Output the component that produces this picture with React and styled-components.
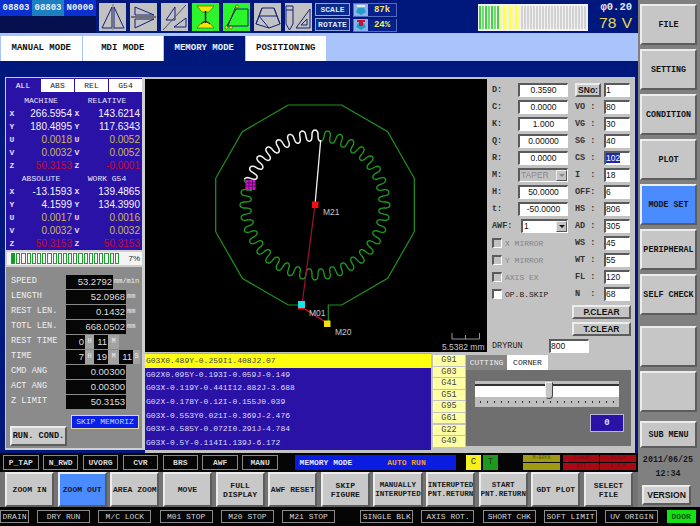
import React from 'react';
import styled, { createGlobalStyle, css } from 'styled-components';

const Global = createGlobalStyle`
  html, body { margin: 0; padding: 0; background: #000; }
  * { box-sizing: border-box; }
`;

const mono = css`font-family: "Liberation Mono", "DejaVu Sans Mono", monospace;`;
const sans = css`font-family: "Liberation Sans", Arial, sans-serif;`;
const raised = css`
  border-style: solid; border-width: 2px;
  border-color: #ececec #5c5c5c #5c5c5c #ececec;
`;
const sunken = css`
  border-style: solid; border-width: 2px 1px 1px 2px;
  border-color: #5a5a5a #fff #fff #5a5a5a;
`;

const Root = styled.div`
  width: 700px; height: 526px; overflow: hidden; display: flex; flex-direction: column;
  background: #000; ${mono}
`;
const Upper = styled.div`display: flex; height: 507px;`;
const Main = styled.div`width: 638px; display: flex; flex-direction: column; background: #00187c;`;

/* ---------- top bar ---------- */
const TopBar = styled.div`height: 33px; display: flex; align-items: flex-start; background: #00187c;`;
const Program = styled.div`width: 96px; height: 33px; background: #07104f; flex: none;`;
const ProgramRow = styled.div`display: flex; height: 16px;`;
const ProgramCell = styled.div`
  width: 32px; line-height: 16px; text-align: center; font-size: 9px; font-weight: bold; color: #e8f0ff;
  background: ${p => p.$alt ? '#1c80c0' : '#0a30d0'};
`;
const IconRow = styled.div`display: flex; gap: 4px; margin: 3px 0 0 3px;`;
const IconTile = styled.div`
  width: 27px; height: 28px; background: ${p => p.$on ? '#2cf52c' : '#c2c2c2'};
  svg { display: block; width: 27px; height: 28px; }
`;
const ScaleCol = styled.div`display: flex; flex-direction: column; gap: 2px; margin: 3px 0 0 3px; width: 35px;`;
const ScaleBtn = styled.div`
  height: 13px; line-height: 11px; text-align: center; font-size: 8px; font-weight: bold; color: #dce6ff;
  background: #0c2a8c; border: 1px solid #8ea6dc;
`;
const ValueCol = styled.div`display: flex; flex-direction: column; gap: 2px; margin: 3px 0 0 3px; width: 44px;`;
const ValueRow = styled.div`
  height: 13.5px; display: flex; align-items: center; background: #4d6cc0; padding: 0 1px;
  svg { display: block; flex: none; }
`;
const ValueText = styled.div`
  flex: 1; height: 12px; line-height: 12px; background: #05208c; color: #f0e860; font-size: 9px; font-weight: bold; text-align: center;
`;
const Gauge = styled.div`
  width: 110px; height: 27px; margin: 4px 0 0 81px; background: #f2f2f2; padding: 2px 1px;
  display: flex; gap: 1px; flex: none;
`;
const Tick = styled.div`width: 2px; flex: none; background: ${p => p.$c};`;
const SpindleCol = styled.div`width: 35px; margin: 2px 0 0 9px; text-align: right; flex: none;`;
const Phi = styled.div`font-size: 10.5px; font-weight: bold; color: #e0e8ff; line-height: 11px;`;
const Volt = styled.div`${sans} font-size: 15.5px; color: #e8d84c; line-height: 17px; margin-top: 1px; word-spacing: 1px; white-space: nowrap;`;

/* ---------- mode tabs ---------- */
const ModeStrip = styled.div`height: 28px; background: #a9c4fa; padding: 3px 0 0 1px; display: flex; gap: 1px;`;
const ModeTab = styled.div`
  width: 80.5px; line-height: 25px; text-align: center; font-size: 9px; font-weight: bold;
  color: ${p => p.$on ? '#e8f0ff' : '#101010'}; background: ${p => p.$on ? '#00187c' : '#fff'};
`;

/* ---------- workspace ---------- */
const Workspace = styled.div`height: 392px; padding-top: 16px; display: flex; background: #00187c;`;
const LeftPanel = styled.div`
  width: 140px; height: 373px; margin-left: 5px; padding: 1px 3px 2px 1px; background: #cfcfcf; flex: none;
  display: flex; flex-direction: column; gap: 2px;
`;
const PositionPanel = styled.div`height: 172px; background: #2b12a6; padding: 1px 2px 0; color: #fff;`;
const PosTabs = styled.div`display: flex; gap: 1px; margin: 0 -2px; height: 13px;`;
const PosTab = styled.div`
  width: ${p => p.$w}px; line-height: 13px; text-align: center; font-size: 8px;
  color: ${p => p.$on ? '#fff' : '#222'}; background: ${p => p.$on ? '#2b12a6' : '#fff'};
`;
const PosHead = styled.div`
  display: grid; grid-template-columns: 66px 66px; height: ${p => p.$first ? 15 : 13}px;
  padding-top: ${p => p.$first ? 2 : 0}px; line-height: 13px; text-align: center; font-size: 8px; color: #e8e8ff;
`;
const PosRow = styled.div`
  display: grid; grid-template-columns: 8px 56px 10px 58px; height: 13px; line-height: 13px; font-size: 10px;
  ${sans} color: ${p => p.$c};
`;
const Axis = styled.div`${mono} text-align: center; font-size: 8px; font-weight: bold; color: #e0e0ff;`;
const PosVal = styled.div`text-align: right;`;

const ProgressBox = styled.div`
  height: 13px; background: #f4f4f4; display: flex; align-items: center; padding: 0 2px 0 4px; border-left: 1px solid #ccc;
`;
const Cells = styled.div`display: flex; gap: 1px; flex: none; width: 110px;`;
const Cell = styled.div`
  width: 4.2px; height: 11px; flex: none; border: 1px solid #1f9d2f;
  background: ${p => p.$on ? '#0d9a22' : 'transparent'};
`;
const Percent = styled.div`${sans} font-size: 8px; color: #222; margin-left: auto;`;

const InfoPanel = styled.div`
  flex: 1; background: #8b8b8b; padding: 8px 0 0 5px; display: flex; flex-direction: column; gap: 1.5px; color: #f0f0f0;
`;
const InfoRow = styled.div`display: flex; height: 13.5px; align-items: stretch;`;
const InfoLabel = styled.div`width: 55px; line-height: 13.5px; font-size: 8.6px; flex: none;`;
const ValueBox = styled.div`
  ${sans} width: ${p => p.$w}px; background: #060606; color: #dedede; font-size: 9.5px; text-align: right; line-height: 13.5px; padding-right: 1px; flex: none;
`;
const UnitText = styled.div`
  line-height: 13.5px; font-size: 7px; color: #ededed; padding-left: 1px; white-space: nowrap;
  ${p => p.$w && `width: ${p.$w}px; text-align: center; padding: 0; background: #a2a2a2;`}
`;
const Footer = styled.div`display: flex; gap: 4px; margin-left: -1px;`;
const RunBtn = styled.div`
  ${raised} width: 57px; height: 20px; margin-top: 16px; line-height: 16px; text-align: center; background: #cacaca; color: #111;
  font-size: 8.6px; font-weight: bold; white-space: nowrap;
`;
const SkipBtn = styled.div`
  width: 68px; height: 14px; margin-top: 5px; line-height: 12px; text-align: center; background: #0a1ee8; color: #b6dcff;
  border: 1px solid #e0d8a0; font-size: 8px; white-space: nowrap;
`;

const CenterCol = styled.div`width: 490px; display: flex; flex-direction: column; background: #c2c2c2; flex: none;`;
const UpperRow = styled.div`height: 276px; display: flex;`;
const Canvas = styled.div`
  width: 342px; height: 273px; margin-top: 2px; background: #000; flex: none;
  svg { display: block; }
`;
const Params = styled.div`flex: 1; padding: 6px 0 0 5px; color: #222;`;
const ParamCols = styled.div`display: flex;`;
const ParamCol = styled.div`display: flex; flex-direction: column; gap: 3px; width: ${p => p.$w}px; flex: none;`;
const ParamRow = styled.div`display: flex; height: 14px; align-items: center; font-size: 8.5px; ${p => p.$off && 'color: #858585;'}`;
const ParamLabel = styled.div`width: ${p => p.$w}px; flex: none; font-weight: bold; color: #333; white-space: pre;`;
const Field = styled.div`
  ${sunken} ${sans} width: ${p => p.$w}px; height: 14px; background: #fff; color: #111; flex: none;
  font-size: 8.5px; line-height: 11px; text-align: ${p => p.$center ? 'center' : 'left'};
`;
const Combo = styled.div`
  ${sunken} ${sans} width: ${p => p.$w}px; height: 14px; flex: none; display: flex; align-items: stretch; justify-content: space-between;
  background: ${p => p.$off ? '#c2c2c2' : '#fff'}; color: ${p => p.$off ? '#8a8a8a' : '#111'}; font-size: 8.5px; line-height: 11px; padding-left: 1px;
`;
const ComboBtn = styled.div`
  width: 11px; background: #c4c4c4; border: 1px solid; border-color: #eee #555 #555 #eee; display: flex; align-items: center; justify-content: center;
  &::after {
    content: ''; border-style: solid; border-width: 3px 3px 0; border-color: ${p => p.$off ? '#888' : '#111'} transparent transparent;
  }
`;
const Check = styled.div`
  ${sunken} width: 10px; height: 10px; flex: none; margin-right: 3px; background: ${p => p.$off ? '#c2c2c2' : '#fff'};
`;
const CheckText = styled.div`font-size: 8px;`;
const SnoBtn = styled.div`
  ${raised} ${sans} width: 26px; height: 14px; margin-right: 3px; line-height: 10px; font-size: 8.5px; font-weight: bold; text-align: center; background: #c8c8c8; color: #111;
`;
const Selected = styled.span`background: #1a2ab0; color: #fff;`;
const ClearCol = styled.div`display: flex; flex-direction: column; gap: 3px; margin: 4px 0 0 80px; width: 59px;`;
const ClearBtn = styled.div`
  ${raised} ${sans} height: 14px; line-height: 10px; text-align: center; font-size: 8.5px; font-weight: bold; color: #111; background: #c4c4c4;
`;
const DryRow = styled.div`display: flex; align-items: center; height: 14px; margin-top: 3px; font-size: 8.5px;`;
const DryLabel = styled.div`width: 57px; flex: none; color: #222;`;

const LowerRow = styled.div`height: 97px; display: flex;`;
const CodeList = styled.div`width: 286px; background: #2b12a6; border-top: 1px solid #aaa; flex: none;`;
const CodeLine = styled.div`
  height: 13.7px; line-height: 13.7px; padding-left: 1px; font-size: 8px; white-space: pre;
  color: ${p => p.$on ? '#444' : '#dcdcff'}; background: ${p => p.$on ? '#ffff10' : 'transparent'};
`;
const GCol = styled.div`width: 34px; padding: 2px 0 0 2px; display: flex; flex-direction: column; gap: 1.1px; flex: none;`;
const GCell = styled.div`
  width: 32px; height: 10.5px; background: #ffffa4; color: #444; font-size: 8.5px; line-height: 10.5px; text-align: center;
`;
const CutPanel = styled.div`flex: 1; display: flex; flex-direction: column; padding-left: 1px;`;
const CutTabs = styled.div`display: flex; height: 17px; padding-top: 2px;`;
const CutTab = styled.div`
  width: ${p => p.$w}px; line-height: 15px; text-align: center; font-size: 8px;
  color: ${p => p.$on ? '#222' : '#eee'}; background: ${p => p.$on ? '#fff' : '#858585'};
`;
const CutBody = styled.div`width: 165px; height: 76px; background: #6f6f6f; padding: 11px 0 0 9px;`;
const SliderBox = styled.div`width: 144px; height: 26px; background: #bdbdbd; padding-top: 3px; position: relative;`;
const Trough = styled.div`height: 13px; background: #fff; border-top: 2px solid #333;`;
const Thumb = styled.div`
  position: absolute; left: 70px; top: 1px; width: 8px; height: 17px; background: #c6c6c6;
  border: 1px solid; border-color: #eee #444 #444 #eee; border-radius: 0 0 4px 4px;
`;
const Dots = styled.div`
  height: 2px; margin: 4px 5px 0;
  background: repeating-linear-gradient(90deg, #333 0 1px, transparent 1px 7px);
`;
const ZeroBox = styled.div`
  width: 34px; height: 18px; margin: 7px 0 0 115px; background: #2b12a6; color: #dfe4ff; border: 1px solid #b8b8d8; font-size: 9px; font-weight: bold; line-height: 16px; text-align: center;
`;

/* ---------- status row ---------- */
const StatusRow = styled.div`height: 19px; background: #050505; display: flex; padding: 2px 0 2px 3px; flex: none;`;
const FlagGroup = styled.div`display: flex; gap: 4.4px; flex: none; width: 292px;`;
const Flag = styled.div`
  width: 35.5px; line-height: 13px; border: 1px solid #8a8a8a; text-align: center; font-size: 8px; color: #d8d8d8; font-weight: bold;
`;
const ModeBlock = styled.div`
  width: 161px; background: #0a1ce0; display: flex; line-height: 15px; font-size: 8px; font-weight: bold; flex: none;
`;
const ModeName = styled.div`width: 62px; text-align: center; color: #e0e8ff; white-space: nowrap;`;
const RunName = styled.div`flex: 1; text-align: center; color: #f09a3a;`;
const Lamp = styled.div`
  width: 15px; margin-left: ${p => p.$ml}px; text-align: center; line-height: 15px; font-size: 9px; color: #333; background: ${p => p.$c}; flex: none;
`;
const Alarm = styled.div`
  display: grid; grid-template-columns: ${p => p.$cols}; grid-template-rows: 1fr 1fr; gap: 1px; margin-left: ${p => p.$ml}px; width: ${p => p.$w}px; flex: none;
`;
const AlarmCell = styled.div`
  font-size: 5px; line-height: 7px; text-align: center; overflow: hidden; white-space: nowrap;
  background: ${p => p.$c}; color: ${p => p.$t};
`;

/* ---------- soft keys ---------- */
const SoftKeys = styled.div`
  height: 35px; display: flex; gap: 3.5px; padding: 0 5px; background: #737373; flex: none;
`;
const SoftKey = styled.div`
  ${raised} flex: 1 1 0; min-width: 0; display: flex; align-items: center; justify-content: center; text-align: center;
  font-size: ${p => p.$small ? 7.6 : 8.1}px; line-height: 9px; font-weight: bold; color: #1a1a1a; white-space: pre; overflow: hidden;
  background: ${p => p.$on ? '#4a8cff' : '#c8c8c8'};
`;

/* ---------- sidebar ---------- */
const Side = styled.div`
  width: 62px; background: #808080; padding: 4px 3px 0 2px; display: flex; flex-direction: column; gap: 4px; flex: none;
`;
const SideBtn = styled.div`
  ${raised} height: ${p => p.$h || 41}px; ${p => p.$mt ? `margin-top: ${p.$mt}px;` : ''} display: flex; align-items: center; justify-content: center;
  font-size: 8.4px; font-weight: bold; color: #111; white-space: nowrap;
  background: ${p => p.$on ? '#4a8cff' : '#c6c6c6'};
`;
const DateBlock = styled.div`
  text-align: center; font-size: 8.4px; font-weight: bold; color: #181818; line-height: 14px; padding-top: 1px; margin-left: -1px;
`;
const VersionBtn = styled.div`
  ${raised} ${sans} width: 49px; height: 20px; margin: 4px 0 0 3px; line-height: 16px; background: #cfcfcf; color: #111; font-size: 8.6px; font-weight: bold; text-align: center;
`;

/* ---------- bottom strip ---------- */
const BottomStrip = styled.div`height: 19px; display: flex; padding: 3px 0 3px 0; background: #050505;`;
const BottomGroup = styled.div`display: flex; gap: 8.3px; margin-left: ${p => p.$ml}px; flex: none;`;
const BottomFlag = styled.div`
  width: ${p => p.$w || 53}px; line-height: 11px; text-align: center; border: 1px solid #8a8a8a; font-size: 8px; color: #d4d4d4; white-space: nowrap; overflow: hidden;
  ${p => p.$on && 'background: #14e014; color: #0a5a0a; border-color: #14e014; font-weight: bold;'}
`;

/* ---------- data ---------- */
const N = '#14207c';
const ic = { fill: 'none', stroke: N, strokeWidth: 1 };
const Icon1 = () => (
  <svg viewBox="0 0 27 28" {...ic}><path d="M13 4L3 25H13Z M15 4L25 25H15Z" /><path d="M14 1V27" stroke="#777" /></svg>
);
const Icon2 = () => (
  <svg viewBox="0 0 27 28" {...ic}><path d="M5 4L24 12H5Z M5 25L24 16H5Z" /><path d="M1 14H26" strokeWidth="1.5" stroke="#555" /></svg>
);
const Icon3 = () => (
  <svg viewBox="0 0 27 28" {...ic}><path d="M14 4V17L5 17Z M13 24L25 24V15Z" /><path d="M2 27L25 2" stroke="#555" /></svg>
);
const Icon4 = () => (
  <svg viewBox="0 0 27 28">
    <path d="M5 3H22L17 9H10Z M5 25H22L17 19H10Z" fill="#f5e500" stroke="#333" strokeWidth=".5" />
    <path d="M13.5 8V20" stroke="#111" strokeWidth="1.5" />
    <path d="M9 21L13.5 18L18 21" stroke="#111" fill="none" />
  </svg>
);
const Icon5 = () => (
  <svg viewBox="0 0 27 28">
    <path d="M13 6H25V23H4Z" fill="none" stroke={N} />
    <path d="M13 3L4 25" stroke="#333" fill="none" />
    <circle cx="14" cy="3.5" r="1.5" fill="#f5e500" stroke="#333" strokeWidth=".5" />
    <circle cx="3.5" cy="24.5" r="1.5" fill="#f5e500" stroke="#333" strokeWidth=".5" />
    <circle cx="8" cy="24.5" r="1.5" fill="#f5e500" stroke="#333" strokeWidth=".5" />
  </svg>
);
const Icon6 = () => (
  <svg viewBox="0 0 27 28" {...ic}><path d="M8 5H20L26 21L15 25L2 21Z M8 5L5 13H23L20 5 M5 13L2 21 M23 13L26 21 M5 13L15 25" /></svg>
);
const Icon7 = () => (
  <svg viewBox="0 0 27 28" {...ic}><path d="M1 3H8V21L4.5 27L1 21Z M1 7H8" /><path d="M25 6V25H11Z M22 16V22H16Z" /></svg>
);
const tiles = [[Icon1], [Icon2], [Icon3], [Icon4, 1], [Icon5, 1], [Icon6], [Icon7]];

const Thumbnail = ({ red }) => (
  <svg width="14" height="12" viewBox="0 0 14 12">
    <rect width="14" height="12" fill="#8fb0e8" />
    <path d="M2 8L7 11L12 8L10 4H4Z" fill="#1fa0c8" />
    <path d="M3 2H11" stroke={red ? '#d0102a' : '#e8e8e8'} strokeWidth="2" />
    {red && <rect x="5" y="1" width="4" height="6" fill="#d0102a" />}
  </svg>
);

const gaugeTicks = Array.from({ length: 36 }, (_, i) =>
  i < 7 ? (i % 2 ? '#6fe06f' : '#46d246') : i < 14 ? (i % 2 ? '#fbfb90' : '#ffff48') : '#d2d2d2');

const posBlocks = [
  {
    head: ['MACHINE', 'RELATIVE'],
    rows: [
      ['X', '266.5954', 'X', '143.6214', '#f4f4ff'],
      ['Y', '180.4895', 'Y', '117.6343', '#f4f4ff'],
      ['U', '0.0018', 'U', '0.0052', '#c8b85c'],
      ['V', '0.0032', 'V', '0.0052', '#c8b85c'],
      ['Z', '50.3153', 'Z', '-0.0001', '#c0102c'],
    ],
  },
  {
    head: ['ABSOLUTE', 'WORK G54'],
    rows: [
      ['X', '-13.1593', 'X', '139.4865', '#f4f4ff'],
      ['Y', '4.1599', 'Y', '134.3990', '#f4f4ff'],
      ['U', '0.0017', 'U', '0.0016', '#c8b85c'],
      ['V', '0.0032', 'V', '0.0032', '#c8b85c'],
      ['Z', '50.3153', 'Z', '50.3153', '#c0102c'],
    ],
  },
];

const info = [
  ['SPEED', '53.2792', 'mm/min', 47],
  ['LENGTH', '52.0968', 'mm', 60],
  ['REST LEN.', '0.1432', 'mm', 60],
  ['TOTL LEN.', '668.0502', 'mm', 60],
];
const info2 = [['CMD ANG', '0.00300'], ['ACT ANG', '0.00300'], ['Z LIMIT', '50.3153']];

const leftParams = [
  ['D:', '0.3590'], ['C:', '0.0000'], ['K:', '1.000'], ['Q:', '0.00000'], ['R:', '0.0000'],
];
const leftParams2 = [['H:', '50.0000'], ['t:', '-50.0000']];
const rightParams = [
  ['VO :', '80'], ['VG :', '30'], ['SG :', '40'], ['CS :', '102', 1], ['I  :', '18'], ['OFF:', '6'],
  ['HS :', '806'], ['AD :', '305'], ['WS :', '45'], ['WT :', '55'], ['FL :', '120'], ['N  :', '68'],
];
const code = [
  'G03X0.489Y-0.259I1.408J2.07',
  'G02X0.095Y-0.193I-0.059J-0.149',
  'G03X-0.119Y-0.441I12.882J-3.688',
  'G02X-0.178Y-0.12I-0.155J0.039',
  'G03X-0.553Y0.021I-0.369J-2.476',
  'G03X-0.585Y-0.072I0.291J-4.784',
  'G03X-0.5Y-0.114I1.139J-6.172',
];
const gCodes = ['G91', 'G03', 'G41', 'G51', 'G95', 'G61', 'G22', 'G49'];
const flags = ['P_TAP', 'N_RWD', 'UVORG', 'CVR', 'BRS', 'AWF', 'MANU'];
const softKeys = [
  ['ZOOM IN'], ['ZOOM OUT', 1], ['AREA ZOOM'], ['MOVE'], ['FULL\nDISPLAY'], ['AWF RESET'], ['SKIP\nFIGURE'],
  ['MANUALLY\nINTERUPTED', 0, 1], ['INTERUPTED\nPNT.RETURN', 0, 1], ['START\nPNT.RETURN', 0, 1], ['GDT PLOT'], ['SELECT\nFILE'],
];
const sideTop = [['FILE'], ['SETTING'], ['CONDITION'], ['PLOT'], ['MODE SET', 1], ['PERIPHERAL'], ['SELF CHECK']];

/* gear wave: angles in degrees, screen coordinates, centre 170,125 */
const wave = (from, to) => {
  const cx = 170, cy = 125, pts = [];
  const steps = Math.abs(to - from) * 2;
  for (let i = 0; i <= steps; i++) {
    const a = from + (to - from) * (i / steps);
    const phi = ((a + 90) * 36 * Math.PI) / 180;
    const r = 69.5 + 5.5 * Math.cos(phi);
    const t = ((a + 0.7 * Math.sin(2 * phi)) * Math.PI) / 180;
    pts.push(`${(cx + r * Math.cos(t)).toFixed(1)},${(cy + r * Math.sin(t)).toFixed(1)}`);
  }
  return 'M' + pts.join('L');
};

const Drawing = () => (
  <svg width="342" height="273" viewBox="0 -1 342 273">
    <path
      d="M143.3 25H196.7L242.7 51.7L269.3 98.3V151.7L242.7 198.3L196.7 225H183.3V243 M143.3 25L97.3 51.7L70.7 98.3V151.7L97.3 198.3L143.3 225H157"
      fill="none" stroke="#1f951f" strokeWidth="1.2"
    />
    <path d={wave(-160, -445)} fill="none" stroke="#1f9d1f" strokeWidth="1.3" />
    <path d={wave(-85, -160)} fill="none" stroke="#f2f2f2" strokeWidth="1.5" />
    <path d="M170 125L175.7 60" stroke="#f2f2f2" strokeWidth="1.3" />
    <path d="M170 125L156.7 227" stroke="#a01030" strokeWidth="1.2" />
    <path d="M156.7 227L182 243" stroke="#e01030" strokeWidth="1.2" />
    <rect x="100.5" y="100" width="10" height="10" fill="#c818c8" />
    <path d="M100.5 103H110.5M100.5 106H110.5M104 100V110M107.5 100V110" stroke="#300030" strokeWidth=".6" />
    <rect x="167" y="121.5" width="6.5" height="6.5" fill="#f01010" />
    <rect x="153" y="221" width="7" height="7" fill="#10e8e8" />
    <rect x="153" y="228" width="6" height="1.5" fill="#f01010" />
    <rect x="179" y="240.5" width="6.5" height="6.5" fill="#f0e010" />
    <g fontFamily="'Liberation Sans', sans-serif" fontSize="8.5" fill="#c8c8c8">
      <text x="178" y="135">M21</text>
      <text x="164" y="236">M01</text>
      <text x="190" y="255">M20</text>
      <text x="297" y="270">5.5382 mm</text>
    </g>
    <path d="M307 253V259H334.5V253M320.5 255V259" fill="none" stroke="#bdbdbd" strokeWidth=".8" />
  </svg>
);

const TimeRow = ({ label, a, b, c }) => (
  <InfoRow>
    <InfoLabel>{label}</InfoLabel>
    <ValueBox $w={19}>{a}</ValueBox>
    <UnitText $w={9}>H</UnitText>
    <ValueBox $w={14}>{b}</ValueBox>
    <UnitText $w={11}>M</UnitText>
    {c && <ValueBox $w={14}>{c}</ValueBox>}
    {c && <UnitText $w={7}>S</UnitText>}
  </InfoRow>
);

export default function App() {
  return (
    <Root>
      <Global />
      <Upper>
        <Main>
          <TopBar>
            <Program>
              <ProgramRow>
                <ProgramCell>08803</ProgramCell>
                <ProgramCell $alt>08803</ProgramCell>
                <ProgramCell>N0000</ProgramCell>
              </ProgramRow>
            </Program>
            <IconRow>
              {tiles.map(([I, on], i) => <IconTile key={i} $on={on}><I /></IconTile>)}
            </IconRow>
            <ScaleCol>
              <ScaleBtn>SCALE</ScaleBtn>
              <ScaleBtn>ROTATE</ScaleBtn>
            </ScaleCol>
            <ValueCol>
              <ValueRow><Thumbnail /><ValueText>87k</ValueText></ValueRow>
              <ValueRow><Thumbnail red /><ValueText>24%</ValueText></ValueRow>
            </ValueCol>
            <Gauge>{gaugeTicks.map((c, i) => <Tick key={i} $c={c} />)}</Gauge>
            <SpindleCol>
              <Phi>φ0.20</Phi>
              <Volt>78 V</Volt>
            </SpindleCol>
          </TopBar>
          <ModeStrip>
            <ModeTab>MANUAL MODE</ModeTab>
            <ModeTab>MDI MODE</ModeTab>
            <ModeTab $on>MEMORY MODE</ModeTab>
            <ModeTab>POSITIONING</ModeTab>
          </ModeStrip>
          <Workspace>
            <LeftPanel>
              <PositionPanel>
                <PosTabs>
                  <PosTab $w={34} $on>ALL</PosTab>
                  <PosTab $w={33}>ABS</PosTab>
                  <PosTab $w={33}>REL</PosTab>
                  <PosTab $w={33}>G54</PosTab>
                </PosTabs>
                {posBlocks.map((b, i) => (
                  <div key={i}>
                    <PosHead $first={i === 0}><div>{b.head[0]}</div><div>{b.head[1]}</div></PosHead>
                    {b.rows.map(r => (
                      <PosRow key={r[0]} $c={r[4]}>
                        <Axis>{r[0]}</Axis><PosVal>{r[1]}</PosVal>
                        <Axis>{r[2]}</Axis><PosVal>{r[3]}</PosVal>
                      </PosRow>
                    ))}
                  </div>
                ))}
              </PositionPanel>
              <ProgressBox>
                <Cells>{Array.from({ length: 21 }, (_, i) => <Cell key={i} $on={i === 0} />)}</Cells>
                <Percent>7%</Percent>
              </ProgressBox>
              <InfoPanel>
                {info.map(r => (
                  <InfoRow key={r[0]}>
                    <InfoLabel>{r[0]}</InfoLabel>
                    <ValueBox $w={r[3]}>{r[1]}</ValueBox>
                    <UnitText>{r[2]}</UnitText>
                  </InfoRow>
                ))}
                <TimeRow label="REST TIME" a="0" b="11" />
                <TimeRow label="TIME" a="7" b="19" c="11" />
                {info2.map(r => (
                  <InfoRow key={r[0]}>
                    <InfoLabel>{r[0]}</InfoLabel>
                    <ValueBox $w={60}>{r[1]}</ValueBox>
                  </InfoRow>
                ))}
                <Footer>
                  <RunBtn>RUN. COND.</RunBtn>
                  <SkipBtn>SKIP MEMORIZ</SkipBtn>
                </Footer>
              </InfoPanel>
            </LeftPanel>
            <CenterCol>
              <UpperRow>
                <Canvas><Drawing /></Canvas>
                <Params>
                  <ParamCols>
                    <ParamCol $w={83}>
                      {leftParams.map(r => (
                        <ParamRow key={r[0]}><ParamLabel $w={26}>{r[0]}</ParamLabel><Field $w={50} $center>{r[1]}</Field></ParamRow>
                      ))}
                      <ParamRow><ParamLabel $w={26}>M:</ParamLabel><Combo $w={50} $off>TAPER<ComboBtn $off /></Combo></ParamRow>
                      {leftParams2.map(r => (
                        <ParamRow key={r[0]}><ParamLabel $w={26}>{r[0]}</ParamLabel><Field $w={50} $center>{r[1]}</Field></ParamRow>
                      ))}
                      <ParamRow><ParamLabel $w={29}>AWF:</ParamLabel><Combo $w={47}>1<ComboBtn /></Combo></ParamRow>
                      <ParamRow $off><Check $off /><CheckText>X MIRROR</CheckText></ParamRow>
                      <ParamRow $off><Check $off /><CheckText>Y MIRROR</CheckText></ParamRow>
                      <ParamRow $off><Check $off /><CheckText>AXIS EX</CheckText></ParamRow>
                      <ParamRow><Check /><CheckText>OP.B.SKIP</CheckText></ParamRow>
                    </ParamCol>
                    <ParamCol $w={56}>
                      <ParamRow><SnoBtn>SNo:</SnoBtn><Field $w={26}>1</Field></ParamRow>
                      {rightParams.map(r => (
                        <ParamRow key={r[0]}>
                          <ParamLabel $w={29}>{r[0]}</ParamLabel>
                          <Field $w={26}>{r[2] ? <Selected>{r[1]}</Selected> : r[1]}</Field>
                        </ParamRow>
                      ))}
                    </ParamCol>
                  </ParamCols>
                  <ClearCol>
                    <ClearBtn>P.CLEAR</ClearBtn>
                    <ClearBtn>T.CLEAR</ClearBtn>
                  </ClearCol>
                  <DryRow><DryLabel>DRYRUN</DryLabel><Field $w={40}>800</Field></DryRow>
                </Params>
              </UpperRow>
              <LowerRow>
                <CodeList>
                  {code.map((c, i) => <CodeLine key={i} $on={i === 0}>{c}</CodeLine>)}
                </CodeList>
                <GCol>{gCodes.map(g => <GCell key={g}>{g}</GCell>)}</GCol>
                <CutPanel>
                  <CutTabs>
                    <CutTab $w={41}>CUTTING</CutTab>
                    <CutTab $w={41} $on>CORNER</CutTab>
                  </CutTabs>
                  <CutBody>
                    <SliderBox>
                      <Trough />
                      <Thumb />
                      <Dots />
                    </SliderBox>
                    <ZeroBox>0</ZeroBox>
                  </CutBody>
                </CutPanel>
              </LowerRow>
            </CenterCol>
          </Workspace>
          <StatusRow>
            <FlagGroup>{flags.map(f => <Flag key={f}>{f}</Flag>)}</FlagGroup>
            <ModeBlock><ModeName>MEMORY MODE</ModeName><RunName>AUTO RUN</RunName></ModeBlock>
            <Lamp $ml={10} $c="#f6f020">C</Lamp>
            <Lamp $ml={2} $c="#1c9a1c">T</Lamp>
            <Alarm $ml={25} $w={37} $cols="1fr">
              <AlarmCell $c="#a09a14" $t="#5c5a10">M-BRKN</AlarmCell>
              <AlarmCell $c="#a09a14" $t="#5c5a10"> </AlarmCell>
            </Alarm>
            <Alarm $ml={3} $w={73} $cols="1fr 1fr">
              <AlarmCell $c="#a80a14" $t="#701018">C-ALM</AlarmCell>
              <AlarmCell $c="#a80a14" $t="#701018">M-ALM</AlarmCell>
              <AlarmCell $c="#a80a14" $t="#701018">EXT</AlarmCell>
              <AlarmCell $c="#a80a14" $t="#701018">E-ALM</AlarmCell>
            </Alarm>
          </StatusRow>
          <SoftKeys>
            {softKeys.map(([t, on, small]) => <SoftKey key={t} $on={on} $small={small}>{t}</SoftKey>)}
          </SoftKeys>
        </Main>
        <Side>
          {sideTop.map(([t, on]) => <SideBtn key={t} $on={on}>{t}</SideBtn>)}
          <SideBtn $mt={7}> </SideBtn>
          <SideBtn> </SideBtn>
          <SideBtn $mt={5} $h={27}>SUB MENU</SideBtn>
          <DateBlock>
            <div>2011/06/25</div>
            <div>12:34</div>
            <VersionBtn>VERSION</VersionBtn>
          </DateBlock>
        </Side>
      </Upper>
      <BottomStrip>
        <BottomGroup $ml={0}>
          <BottomFlag $w={29}>DRAIN</BottomFlag>
        </BottomGroup>
        <BottomGroup $ml={8}>
          {['DRY RUN', 'M/C LOCK', 'M01 STOP', 'M20 STOP', 'M21 STOP'].map(t => <BottomFlag key={t}>{t}</BottomFlag>)}
        </BottomGroup>
        <BottomGroup $ml={25}>
          {['SINGLE BLK', 'AXIS ROT.', 'SHORT CHK', 'SOFT LIMIT', 'UV ORIGIN'].map(t => <BottomFlag key={t}>{t}</BottomFlag>)}
          <BottomFlag $w={29} $on>DOOR</BottomFlag>
        </BottomGroup>
      </BottomStrip>
    </Root>
  );
}
